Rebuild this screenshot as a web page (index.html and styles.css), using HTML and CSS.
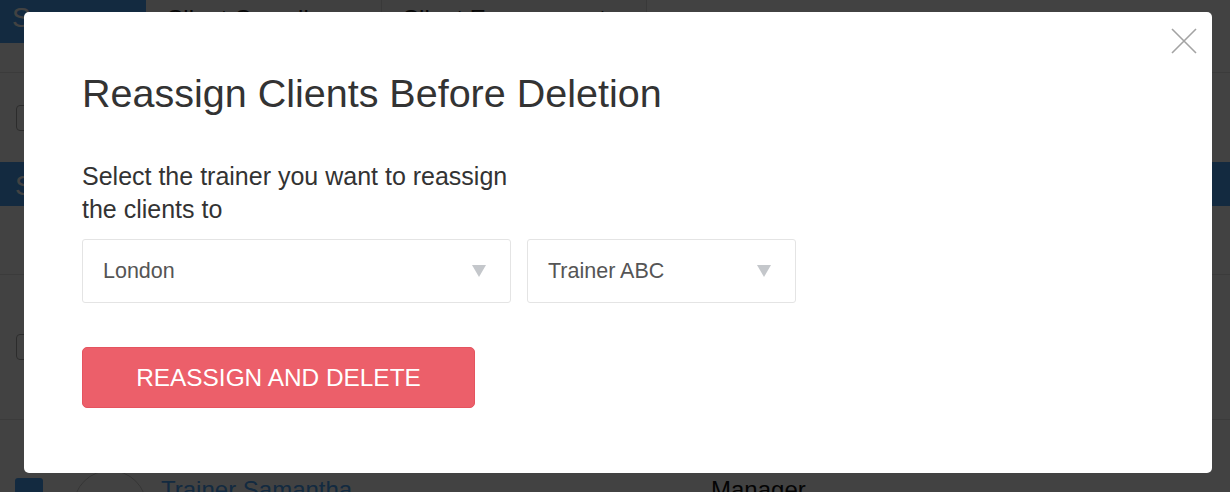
FILE: index.html
```html
<html>
<head>
<title>Trainers</title>
<link rel="stylesheet" href="styles.css">
</head>
<body>

<div class="page">
  <div class="tabs">
    <div class="tab active">Summary</div>
    <div class="tab">Client Compliance</div>
    <div class="tab">Client Engagement</div>
  </div>
  <div class="toolbar"></div>
  <div class="filters">
    <input type="text" class="small-input">
  </div>
  <div class="section-bar">Staff</div>
  <div class="section-head"></div>
  <div class="filters tall">
    <input type="text" class="small-input">
  </div>
  <div class="staff-row">
    <span class="check"></span>
    <span class="avatar"></span>
    <a class="staff-name">Trainer Samantha</a>
    <span class="staff-role">Manager</span>
  </div>
</div>

<div class="overlay">
  <div class="modal">
    <button class="close" type="button" aria-label="Close">
      <svg width="26" height="26" viewBox="0 0 26 26"><path d="M1 1L25 25M25 1L1 25" stroke="#a3a3a3" stroke-width="1.6" fill="none"/></svg>
    </button>
    <h2 class="modal-title">Reassign Clients Before Deletion</h2>
    <p class="modal-text">Select the trainer you want to reassign the clients to</p>
    <div class="selects">
      <div class="select wide">
        <span>London</span>
        <svg width="14" height="12" viewBox="0 0 14 12"><path d="M0 0H14L7 12Z" fill="#c4c7cb"/></svg>
      </div>
      <div class="select narrow">
        <span>Trainer ABC</span>
        <svg width="14" height="12" viewBox="0 0 14 12"><path d="M0 0H14L7 12Z" fill="#c4c7cb"/></svg>
      </div>
    </div>
    <button class="danger" type="button">Reassign and Delete</button>
  </div>
</div>

</body>
</html>
```

FILE: styles.css
```css
body {
  font-family: "Liberation Sans", Arial, sans-serif;
  margin: 0;
  background: #fff;
  overflow: hidden;
}
.page {
  height: 492px;
  overflow: hidden;
}
.tabs {
  display: flex;
  height: 43px;
  background: #fff;
}
.tab {
  padding: 5px 20px 0;
  font-size: 24px;
  color: #222;
  border-right: 1px solid #ddd;
  background: #f6f6f6;
  white-space: nowrap;
}
.tab + .tab + .tab {
  padding-right: 40px;
}
.tab.active {
  width: 146px;
  box-sizing: border-box;
  padding: 2px 12px 0;
  font-size: 28px;
  background: #49a2f6;
  color: #fff;
  border-right: none;
}
.toolbar {
  height: 29px;
  border-bottom: 1px solid #e2e2e2;
}
.filters {
  height: 89px;
  padding: 32px 0 0 16px;
  box-sizing: border-box;
}
.filters.tall {
  height: 145px;
  padding-top: 59px;
  border-bottom: 1px solid #e2e2e2;
}
.small-input {
  width: 180px;
  height: 26px;
  border: 1px solid #aaa;
  border-radius: 4px;
}
.section-bar {
  height: 44px;
  background: #49a2f6;
  color: #fff;
  font-size: 28px;
  padding: 8px 15px 0;
  box-sizing: border-box;
}
.section-head {
  height: 68px;
  border-bottom: 1px solid #e2e2e2;
}
.staff-row {
  display: flex;
  align-items: flex-start;
  padding: 50px 0 0 15px;
}
.check {
  width: 28px;
  height: 28px;
  border-radius: 3px;
  background: #49a2f6;
  margin-top: 8px;
}
.avatar {
  width: 72px;
  height: 72px;
  border-radius: 50%;
  border: 1px solid #ccc;
  margin-left: 30px;
}
.staff-name {
  margin-left: 14px;
  margin-top: 6px;
  font-size: 24px;
  line-height: 28px;
  color: #49a2f6;
  width: 550px;
}
.staff-role {
  margin-top: 6px;
  font-size: 24px;
  line-height: 28px;
  color: #111;
}

.overlay {
  position: fixed;
  top: 0;
  left: 0;
  right: 0;
  bottom: 0;
  background: rgba(0, 0, 0, 0.74);
}
.modal {
  position: relative;
  margin: 12px 18px 0 24px;
  height: 461px;
  box-sizing: border-box;
  padding: 58px 58px 0;
  background: #fff;
  border-radius: 5px;
  color: #333;
}
.close {
  position: absolute;
  top: 16px;
  right: 15px;
  padding: 0;
  border: none;
  background: none;
  cursor: pointer;
}
.close svg {
  display: block;
}
.modal-title {
  margin: 0;
  font-size: 39.5px;
  line-height: 46px;
  font-weight: normal;
  color: #333;
}
.modal-text {
  margin: 44px 0 0;
  max-width: 450px;
  font-size: 25px;
  line-height: 33px;
  color: #333;
}
.selects {
  display: flex;
  gap: 16px;
  margin-top: 13px;
}
.select {
  height: 64px;
  box-sizing: border-box;
  display: flex;
  align-items: center;
  justify-content: space-between;
  padding: 0 24px 0 20px;
  border: 1px solid #e4e4e4;
  border-radius: 3px;
  font-size: 21.5px;
  color: #555;
}
.select.wide {
  width: 429px;
}
.select.narrow {
  width: 269px;
}
.danger {
  display: block;
  margin-top: 44px;
  width: 393px;
  height: 61px;
  border: 1px solid #e5545f;
  border-radius: 5px;
  background: #ec5f6a;
  color: #fff;
  font-family: inherit;
  font-size: 24.4px;
  text-transform: uppercase;
  cursor: pointer;
}
```
